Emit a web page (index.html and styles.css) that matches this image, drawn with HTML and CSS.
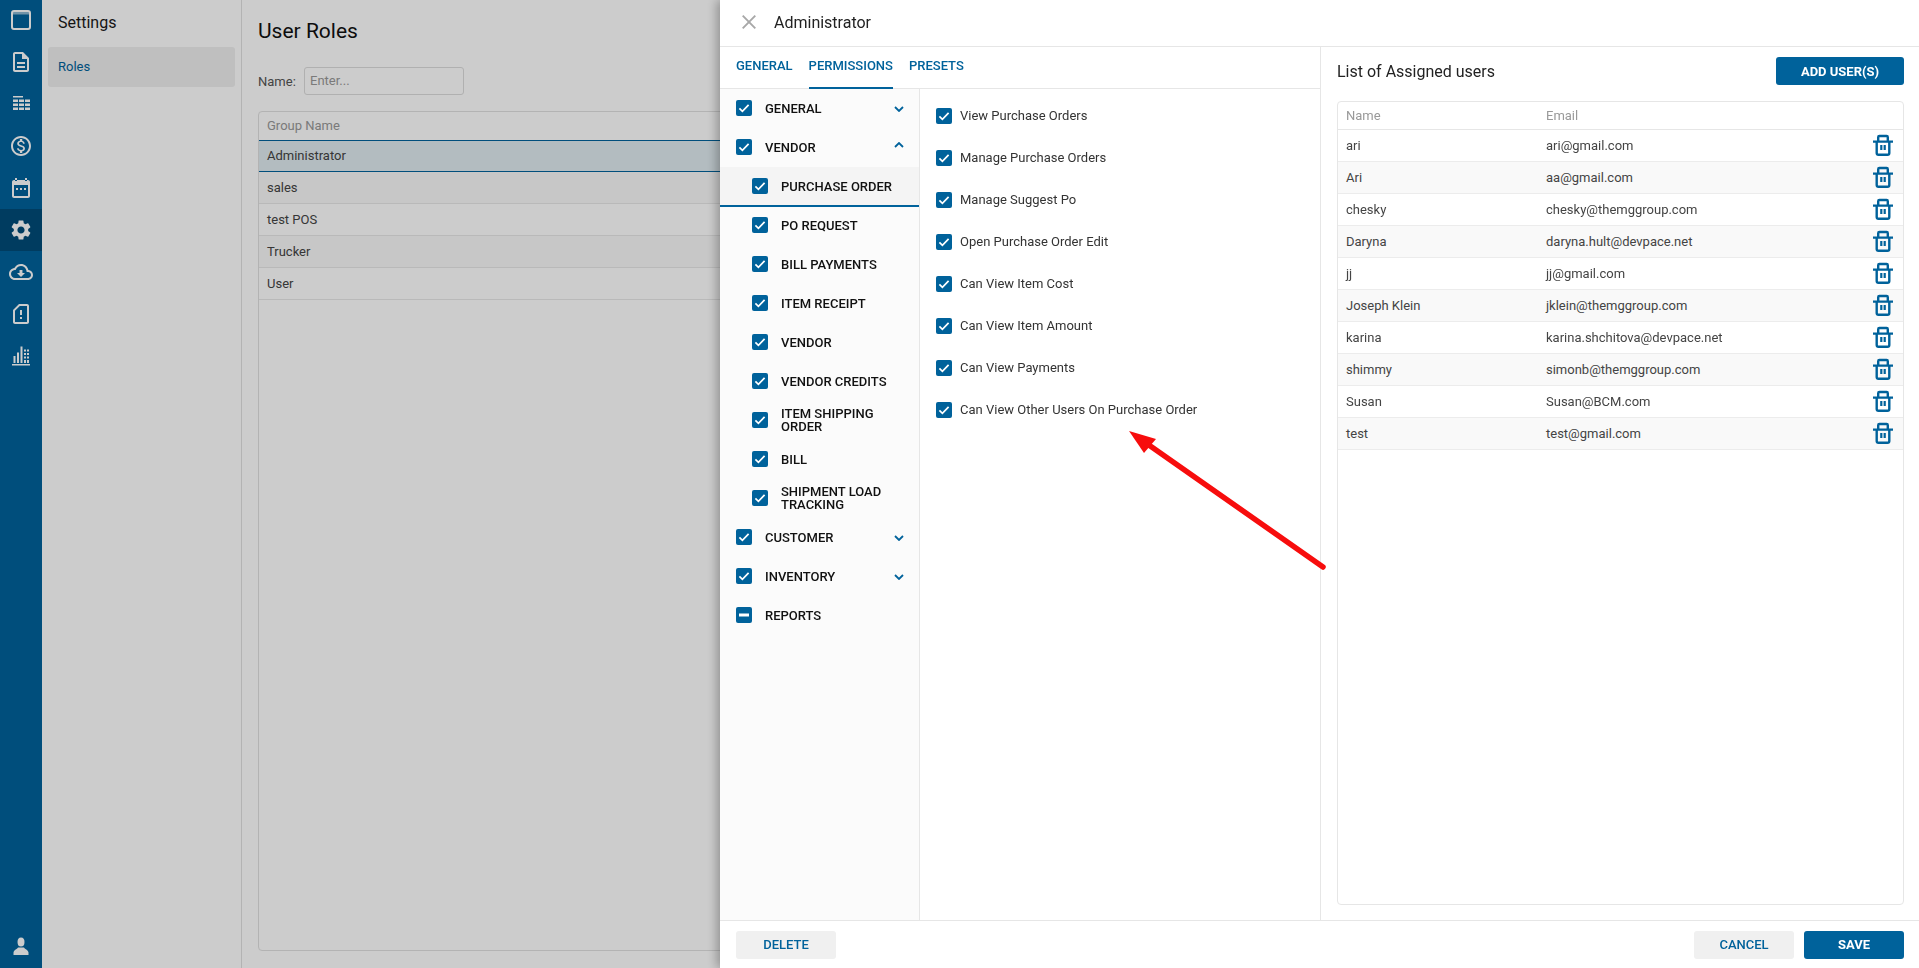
FILE: index.html
```html
<!DOCTYPE html>
<html lang="en">
<head>
<meta charset="utf-8">
<title>User Roles</title>
<link rel="stylesheet" href="styles.css">
</head>
<body>
<svg class="defs" width="0" height="0" aria-hidden="true">
  <symbol id="check" viewBox="0 0 16 16"><rect width="16" height="16" rx="2" fill="#00629b"/><path d="M3.4 8.4l3 3 6.2-6.6" fill="none" stroke="#fff" stroke-width="1.7"/></symbol>
  <symbol id="minus" viewBox="0 0 16 16"><rect width="16" height="16" rx="2" fill="#00629b"/><rect x="3" y="6.5" width="10" height="3" fill="#fff"/></symbol>
  <symbol id="down" viewBox="0 0 10 6"><path d="M1 1l4 4 4-4" fill="none" stroke="#00629b" stroke-width="1.8"/></symbol>
  <symbol id="up" viewBox="0 0 10 6"><path d="M1 5l4-4 4 4" fill="none" stroke="#00629b" stroke-width="1.8"/></symbol>
  <symbol id="trash" viewBox="0 0 20 22"><path d="M0 7.600h20M5.200 7V3.200C5.200 2.500 5.700 2 6.400 2h7.200c.7 0 1.200.5 1.200 1.200V7M3.700 7.600V19c0 1 .8 1.800 1.800 1.800h9c1 0 1.800-.8 1.800-1.800V7.600" fill="none" stroke="#00629b" stroke-width="2.400"/><path d="M7.200 11h2.200v5H7.200zM10.600 11h2.200v5h-2.200z" fill="#00629b"/></symbol>
</svg>

<div class="app">
  <nav class="rail">
    <div class="rail-list">
      <a class="rail-item"><svg class="ic" viewBox="0 0 24 24"><rect x="3" y="3" width="18" height="3.500" fill="currentColor" fill-opacity=".55"/><rect x="3" y="3" width="18" height="18" rx="2" fill="none" stroke="currentColor" stroke-width="2"/></svg></a>
      <a class="rail-item"><svg class="ic" viewBox="0 0 24 24"><path fill="currentColor" d="M8 16h8v2H8zm0-4h8v2H8zm6-10H6c-1.100 0-2 .9-2 2v16c0 1.100.89 2 1.990 2H18c1.100 0 2-.9 2-2V8l-6-6zm4 18H6V4h7v5h5v11z"/></svg></a>
      <a class="rail-item"><svg class="ic" viewBox="0 0 24 24"><path fill="currentColor" d="M4 4h10v1.600H4zM4 7.500h5v2.400H4zM10 7.500h5v2.400h-5zM16 7.500h5v2.400h-5zM4 11.500h5v2.400H4zM10 11.500h5v2.400h-5zM16 11.500h5v2.400h-5zM4 15.500h5v2.400H4zM10 15.500h5v2.400h-5zM16 15.500h5v2.400h-5z"/></svg></a>
      <a class="rail-item"><svg class="ic" viewBox="0 0 24 24"><path fill="currentColor" d="M12 2C6.480 2 2 6.480 2 12s4.480 10 10 10 10-4.480 10-10S17.520 2 12 2zm0 18c-4.410 0-8-3.590-8-8s3.590-8 8-8 8 3.590 8 8-3.590 8-8 8zm.31-8.860c-1.770-.45-2.340-.94-2.340-1.670 0-.84.79-1.430 2.100-1.430 1.380 0 1.900.66 1.940 1.640h1.710c-.05-1.340-.87-2.570-2.490-2.970V5H10.900v1.690c-1.510.32-2.720 1.300-2.720 2.810 0 1.790 1.490 2.690 3.660 3.210 1.950.46 2.340 1.150 2.340 1.870 0 .53-.39 1.390-2.100 1.390-1.600 0-2.230-.72-2.320-1.640H8.040c.1 1.700 1.360 2.660 2.860 2.970V19h2.340v-1.670c1.520-.29 2.720-1.160 2.730-2.770-.01-2.200-1.900-2.960-3.660-3.420z"/></svg></a>
      <a class="rail-item"><svg class="ic" viewBox="0 0 24 24"><path fill="currentColor" d="M6 2h2v3H6zM16 2h2v3h-2zM3 6c0-1.100.9-2 2-2h14c1.100 0 2 .9 2 2v14c0 1.100-.9 2-2 2H5c-1.100 0-2-.9-2-2zm2 3v11h14V9zM7 12h2v2H7zM11 12h2v2h-2zM15 12h2v2h-2z" fill-rule="evenodd"/></svg></a>
      <a class="rail-item active"><svg class="ic" viewBox="0 0 24 24"><path fill="currentColor" d="M19.140 12.940c.04-.3.06-.61.06-.94 0-.32-.02-.64-.07-.94l2.030-1.580a.49.49 0 00.12-.61l-1.920-3.320a.488.488 0 00-.59-.22l-2.390.96c-.5-.38-1.030-.7-1.620-.94l-.36-2.540a.484.484 0 00-.48-.41h-3.840c-.24 0-.43.17-.47.41l-.36 2.540c-.59.24-1.130.57-1.620.94l-2.390-.96c-.22-.08-.47 0-.59.22L2.740 8.870c-.12.21-.08.47.12.61l2.030 1.580c-.05.3-.09.63-.09.94s.02.64.07.94l-2.030 1.580a.49.49 0 00-.12.61l1.920 3.320c.12.22.37.29.59.22l2.390-.96c.5.38 1.030.7 1.620.94l.36 2.540c.05.24.24.41.48.41h3.840c.24 0 .44-.17.47-.41l.36-2.540c.59-.24 1.130-.56 1.620-.94l2.390.96c.22.08.47 0 .59-.22l1.920-3.320c.12-.22.07-.47-.12-.61l-2.010-1.580zM12 15.600c-1.980 0-3.600-1.620-3.600-3.600s1.620-3.600 3.600-3.600 3.600 1.620 3.600 3.600-1.620 3.600-3.600 3.600z"/></svg></a>
      <a class="rail-item"><svg class="ic" viewBox="0 0 24 24"><path fill="currentColor" d="M19.350 10.040C18.670 6.590 15.640 4 12 4 9.110 4 6.600 5.640 5.350 8.040 2.340 8.360 0 10.910 0 14c0 3.310 2.690 6 6 6h13c2.760 0 5-2.240 5-5 0-2.640-2.050-4.780-4.650-4.960zM19 18H6c-2.210 0-4-1.790-4-4 0-2.050 1.530-3.760 3.560-3.970l1.070-.11.5-.95C8.080 7.140 9.940 6 12 6c2.620 0 4.880 1.860 5.390 4.430l.3 1.500 1.530.11c1.560.1 2.780 1.410 2.780 2.960 0 1.650-1.350 3-3 3zm-5.550-8h-2.900v3H8l4 4 4-4h-2.550z"/></svg></a>
      <a class="rail-item"><svg class="ic" viewBox="0 0 24 24"><path fill="currentColor" d="M18 2h-8L4.020 8 4 20c0 1.100.9 2 2 2h12c1.100 0 2-.9 2-2V4c0-1.100-.9-2-2-2zm0 18H6V8.830L10.830 4H18v16zM11 15h2v2h-2zm0-7h2v5h-2z"/></svg></a>
      <a class="rail-item"><svg class="ic" viewBox="0 0 24 24"><path fill="currentColor" d="M3 20h18v1.500H3zM4.500 12h2v7h-2zM8 8.500h2V19H8zM11.500 2.500h2V19h-2zM15 5.500h2v2h-2zM15 9h2v2h-2zM15 12.500h2v2h-2zM15 16h2v3h-2zM18 5.500h2v2h-2zM18 9h2v2h-2zM18 12.500h2v2h-2zM18 16h2v3h-2z"/></svg></a>
    </div>
    <a class="rail-item rail-user"><svg class="ic" viewBox="0 0 24 24"><ellipse cx="12" cy="7" rx="3.500" ry="4.500" fill="currentColor"/><path fill="currentColor" d="M9 12.500h6c.5 1.500 4 2 4.500 5v2.500h-15v-2.500c.5-3 4-3.500 4.500-5z"/></svg></a>
  </nav>

  <aside class="side">
    <div class="side-title">Settings</div>
    <div class="side-link">Roles</div>
  </aside>

  <main class="main">
    <h1 class="page-title">User Roles</h1>
    <div class="filter">
      <label class="filter-label">Name:</label>
      <div class="filter-input">Enter...</div>
    </div>
    <div class="groups">
      <div class="groups-head">Group Name</div>
      <div class="groups-row selected">Administrator</div>
      <div class="groups-row alt">sales</div>
      <div class="groups-row">test POS</div>
      <div class="groups-row alt">Trucker</div>
      <div class="groups-row">User</div>
    </div>
  </main>
</div>

<div class="scrim"></div>

<section class="drawer">
  <header class="drawer-head">
    <svg class="close" viewBox="0 0 14 14"><path d="M.7.7l12.600 12.600M13.300.7L.7 13.300" fill="none" stroke="#a8a8a8" stroke-width="1.900"/></svg>
    <div class="drawer-title">Administrator</div>
  </header>

  <div class="drawer-body">
    <div class="perm-pane">
      <div class="tabs">
        <div class="tab">General</div>
        <div class="tab on">Permissions</div>
        <div class="tab">Presets</div>
      </div>
      <div class="perm-cols">
        <div class="tree">
          <div class="node"><svg class="cb"><use href="#check"/></svg><span class="node-label">GENERAL</span><svg class="chev"><use href="#down"/></svg></div>
          <div class="node"><svg class="cb"><use href="#check"/></svg><span class="node-label">VENDOR</span><svg class="chev chev-up"><use href="#up"/></svg></div>
          <div class="node sub current"><svg class="cb"><use href="#check"/></svg><span class="node-label">PURCHASE ORDER</span></div>
          <div class="node sub"><svg class="cb"><use href="#check"/></svg><span class="node-label">PO REQUEST</span></div>
          <div class="node sub"><svg class="cb"><use href="#check"/></svg><span class="node-label">BILL PAYMENTS</span></div>
          <div class="node sub"><svg class="cb"><use href="#check"/></svg><span class="node-label">ITEM RECEIPT</span></div>
          <div class="node sub"><svg class="cb"><use href="#check"/></svg><span class="node-label">VENDOR</span></div>
          <div class="node sub"><svg class="cb"><use href="#check"/></svg><span class="node-label">VENDOR CREDITS</span></div>
          <div class="node sub"><svg class="cb"><use href="#check"/></svg><span class="node-label">ITEM SHIPPING ORDER</span></div>
          <div class="node sub"><svg class="cb"><use href="#check"/></svg><span class="node-label">BILL</span></div>
          <div class="node sub"><svg class="cb"><use href="#check"/></svg><span class="node-label">SHIPMENT LOAD TRACKING</span></div>
          <div class="node"><svg class="cb"><use href="#check"/></svg><span class="node-label">CUSTOMER</span><svg class="chev"><use href="#down"/></svg></div>
          <div class="node"><svg class="cb"><use href="#check"/></svg><span class="node-label">INVENTORY</span><svg class="chev"><use href="#down"/></svg></div>
          <div class="node"><svg class="cb"><use href="#minus"/></svg><span class="node-label">REPORTS</span></div>
        </div>
        <div class="perms">
          <div class="perm"><svg class="cb"><use href="#check"/></svg>View Purchase Orders</div>
          <div class="perm"><svg class="cb"><use href="#check"/></svg>Manage Purchase Orders</div>
          <div class="perm"><svg class="cb"><use href="#check"/></svg>Manage Suggest Po</div>
          <div class="perm"><svg class="cb"><use href="#check"/></svg>Open Purchase Order Edit</div>
          <div class="perm"><svg class="cb"><use href="#check"/></svg>Can View Item Cost</div>
          <div class="perm"><svg class="cb"><use href="#check"/></svg>Can View Item Amount</div>
          <div class="perm"><svg class="cb"><use href="#check"/></svg>Can View Payments</div>
          <div class="perm"><svg class="cb"><use href="#check"/></svg>Can View Other Users On Purchase Order</div>
        </div>
      </div>
    </div>

    <div class="users-pane">
      <div class="users-head">
        <div class="users-title">List of Assigned users</div>
        <button class="btn primary add">ADD USER(S)</button>
      </div>
      <div class="users">
        <div class="users-row users-cols"><span class="c-name">Name</span><span class="c-mail">Email</span></div>
        <div class="users-row"><span class="c-name">ari</span><span class="c-mail">ari@gmail.com</span><svg class="trash"><use href="#trash"/></svg></div>
        <div class="users-row"><span class="c-name">Ari</span><span class="c-mail">aa@gmail.com</span><svg class="trash"><use href="#trash"/></svg></div>
        <div class="users-row"><span class="c-name">chesky</span><span class="c-mail">chesky@themggroup.com</span><svg class="trash"><use href="#trash"/></svg></div>
        <div class="users-row"><span class="c-name">Daryna</span><span class="c-mail">daryna.hult@devpace.net</span><svg class="trash"><use href="#trash"/></svg></div>
        <div class="users-row"><span class="c-name">jj</span><span class="c-mail">jj@gmail.com</span><svg class="trash"><use href="#trash"/></svg></div>
        <div class="users-row"><span class="c-name">Joseph Klein</span><span class="c-mail">jklein@themggroup.com</span><svg class="trash"><use href="#trash"/></svg></div>
        <div class="users-row"><span class="c-name">karina</span><span class="c-mail">karina.shchitova@devpace.net</span><svg class="trash"><use href="#trash"/></svg></div>
        <div class="users-row"><span class="c-name">shimmy</span><span class="c-mail">simonb@themggroup.com</span><svg class="trash"><use href="#trash"/></svg></div>
        <div class="users-row"><span class="c-name">Susan</span><span class="c-mail">Susan@BCM.com</span><svg class="trash"><use href="#trash"/></svg></div>
        <div class="users-row"><span class="c-name">test</span><span class="c-mail">test@gmail.com</span><svg class="trash"><use href="#trash"/></svg></div>
      </div>
    </div>
  </div>

  <footer class="drawer-foot">
    <button class="btn plain">DELETE</button>
    <div class="foot-right">
      <button class="btn plain">CANCEL</button>
      <button class="btn primary">SAVE</button>
    </div>
  </footer>
</section>

<svg class="arrow" viewBox="0 0 1919 968" aria-hidden="true">
  <line x1="1146" y1="443" x2="1323" y2="567" stroke="#f70d0d" stroke-width="5.500" stroke-linecap="round"/>
  <polygon points="1129,431 1156,439 1144,453" fill="#f70d0d"/>
</svg>
</body>
</html>
```

FILE: styles.css
```css
* { box-sizing: border-box; }
html, body { height: 100%; }
body {
  margin: 0;
  overflow: hidden;
  font-family: Roboto, "Liberation Sans", sans-serif;
  font-size: 13px;
  color: #222;
  background: #fff;
}
.defs { position: absolute; }

.app { display: flex; height: 100vh; }

.rail {
  width: 42px;
  flex: none;
  display: flex;
  flex-direction: column;
  justify-content: space-between;
  background: #00629b;
  color: #fff;
}
.rail-list { margin-top: -1px; }
.rail-item { display: flex; align-items: center; justify-content: center; width: 42px; height: 42px; }
.rail-item.active { background: #004c78; }
.ic { width: 24px; height: 24px; display: block; }

.side { width: 200px; flex: none; border-right: 1px solid #e0e0e0; padding: 0 6px; }
.side-title { font-size: 16px; line-height: 46px; padding-left: 10px; color: #1a1a1a; }
.side-link { margin-top: 1px; height: 40px; line-height: 40px; padding-left: 10px; font-size: 13px; color: #00629b; background: #efefef; border-radius: 3px; }

.main { flex: 1; padding: 0 16px 17px; display: flex; flex-direction: column; min-width: 0; }
.page-title { margin: 17px 0 0; font-size: 21px; font-weight: 400; line-height: 28px; color: #111; }
.filter { display: flex; align-items: center; margin-top: 22px; height: 28px; }
.filter-label { width: 46px; color: #555; }
.filter-input { width: 160px; height: 28px; line-height: 26px; padding-left: 5px; border: 1px solid #dcdcdc; border-radius: 3px; color: #999; }
.groups { flex: 1; margin-top: 16px; border: 1px solid #e0e0e0; border-radius: 4px; }
.groups-head { height: 28px; line-height: 27px; padding-left: 8px; color: #999; }
.groups-row { height: 32px; line-height: 31px; padding-left: 8px; color: #444; border-bottom: 1px solid #e8e8e8; }
.groups-row.alt { background: #f9f9f9; }
.groups-row.selected { background: #e0ebf0; border-top: 1px solid #00629b; border-bottom: 1px solid #00629b; line-height: 29px; }

.scrim { position: fixed; inset: 0; background: rgba(0, 0, 0, .2); }

.drawer {
  position: fixed;
  top: 0;
  right: 0;
  bottom: 0;
  width: 1199px;
  display: flex;
  flex-direction: column;
  background: #fff;
  box-shadow: -3px 0 10px rgba(0, 0, 0, .3);
}
.drawer-head { flex: none; height: 47px; display: flex; align-items: center; padding: 0 0 2px 22px; border-bottom: 1px solid #e6e6e6; }
.close { width: 14px; height: 14px; }
.drawer-title { margin-left: 18px; font-size: 16px; color: #222; }

.drawer-body { flex: 1; display: flex; min-height: 0; }
.perm-pane { width: 600px; flex: none; display: flex; flex-direction: column; }
.tabs { flex: none; height: 42px; display: flex; gap: 16px; padding-left: 16px; border-bottom: 1px solid #e6e6e6; }
.tab { height: 42px; line-height: 38px; font-size: 13px; font-weight: 500; color: #00629b; text-transform: uppercase; }
.tab.on { border-bottom: 2px solid #00629b; }

.perm-cols { flex: 1; display: flex; min-height: 0; }
.tree { width: 200px; flex: none; background: #fbfbfb; border-right: 1px solid #e6e6e6; }
.node { position: relative; height: 39px; padding: 0 0 1px 16px; display: flex; align-items: center; }
.node.sub { padding-left: 32px; }
.node.current { background: #f4f4f4; box-shadow: inset 0 -1px #00629b, 0 1px #00629b; }
.cb { width: 16px; height: 16px; flex: none; display: block; }
.node-label { margin-left: 13px; width: 118px; font-size: 13px; font-weight: 500; line-height: 13px; color: #111; }
.chev { position: absolute; left: 174px; top: 17px; width: 10px; height: 6px; }
.chev-up { top: 14px; }

.perms { flex: 1; padding-top: 5px; }
.perm { height: 42px; display: flex; align-items: center; gap: 8px; padding-left: 16px; font-size: 13px; color: #333; }
.perm .cb { margin-top: 2px; }

.users-pane { flex: 1; display: flex; flex-direction: column; border-left: 1px solid #e6e6e6; padding: 10px 15px 15px 16px; min-width: 0; }
.users-head { flex: none; display: flex; align-items: center; justify-content: space-between; height: 28px; }
.users-title { font-size: 16px; color: #222; }
.users { flex: 1; margin-top: 16px; border: 1px solid #e6e6e6; border-radius: 4px; }
.users-row { position: relative; height: 32px; display: flex; align-items: center; border-bottom: 1px solid #ececec; color: #444; }
.users-row:nth-child(odd) { background: #f9f9f9; }
.users-cols, .users-row.users-cols:nth-child(odd) { height: 28px; background: transparent; color: #999; border-bottom-color: #e6e6e6; }
.c-name { width: 200px; padding-left: 8px; flex: none; }
.c-mail { flex: 1; padding-left: 8px; }
.trash { position: absolute; right: 10px; top: 4px; width: 20px; height: 22px; }

.drawer-foot { flex: none; height: 48px; display: flex; align-items: center; justify-content: space-between; padding: 0 15px 0 16px; border-top: 1px solid #e6e6e6; }
.foot-right { display: flex; gap: 10px; }
.btn { width: 100px; height: 28px; padding: 0; border: 0; border-radius: 3px; font-family: inherit; font-size: 13px; font-weight: 500; }
.btn.plain { background: #f0f0f0; color: #00629b; }
.btn.primary { background: #00629b; color: #fff; font-weight: 700; }
.btn.add { width: 128px; }

.arrow { position: fixed; inset: 0; width: 1919px; height: 968px; pointer-events: none; }
```
